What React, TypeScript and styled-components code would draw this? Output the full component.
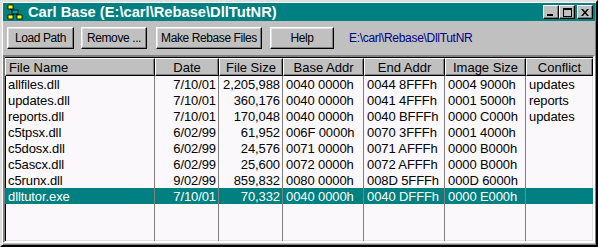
import React from "react"
import { createGlobalStyle, styled } from "styled-components"

const GlobalStyle = createGlobalStyle`
  html, body {
    margin: 0;
    padding: 0;
    background: #c0c0c0;
  }
  * {
    box-sizing: border-box;
  }
`

const COLS = "150px 64px 64px 81px 81px 81px 1fr"

const Window = styled.div`
  width: 598px;
  height: 247px;
  display: flex;
  flex-direction: column;
  background: #c0c0c0;
  border: 2px solid;
  border-color: #dfdfdf #000000 #000000 #dfdfdf;
  box-shadow: inset 1px 1px 0 #ffffff, inset -1px -1px 0 #808080;
  padding: 1px 1px 2px 1px;
  font-family: "Liberation Sans", Arial, sans-serif;
  font-size: 13px;
  color: #000;
  overflow: hidden;
`

const TitleBar = styled.div`
  height: 18px;
  background: #008080;
  display: flex;
  align-items: center;
  padding: 0 2px 0 4px;
  gap: 5px;
`

const TitleText = styled.div`
  flex: 1;
  color: #ffffff;
  font-weight: bold;
  font-size: 14.7px;
  white-space: nowrap;
`

const Controls = styled.div`
  display: flex;
`

const CtrlBtn = styled.div<{ $gapLeft?: boolean }>`
  width: 16px;
  height: 14px;
  margin-left: ${(p) => (p.$gapLeft ? "2px" : "0")};
  background: #c0c0c0;
  border: 1px solid;
  border-color: #ffffff #000000 #000000 #ffffff;
  box-shadow: inset -1px -1px 0 #808080;
  display: flex;
  align-items: center;
  justify-content: center;
`

const Toolbar = styled.div`
  height: 34px;
  display: flex;
  align-items: center;
  padding: 0 0 0 4px;
`

const Button = styled.div<{ $w: number; $gap: number }>`
  width: ${(p) => p.$w}px;
  height: 22px;
  margin-right: ${(p) => p.$gap}px;
  background: #c0c0c0;
  border: 1px solid;
  border-color: #ffffff #000000 #000000 #ffffff;
  box-shadow: inset -1px -1px 0 #808080, inset 1px 1px 0 #dfdfdf;
  display: flex;
  align-items: center;
  justify-content: center;
  white-space: nowrap;
  font-size: 12px;
  letter-spacing: -0.4px;
`

const PathText = styled.div`
  margin-left: 7px;
  color: #000080;
  font-size: 12px;
  letter-spacing: -0.3px;
`

const ListView = styled.div`
  flex: 1;
  border: 2px solid;
  border-color: #808080 #ffffff #ffffff #808080;
  box-shadow: inset 1px 1px 0 #000000, inset -1px -1px 0 #dfdfdf;
  background: #fbf8fb;
  padding: 1px 0 0 0;
  display: flex;
  flex-direction: column;
  position: relative;
`

const Grid = styled.div`
  display: grid;
  grid-template-columns: ${COLS};
`

const HeaderCell = styled.div<{ $align: string }>`
  height: 18px;
  background: #c0c0c0;
  border: 1px solid;
  border-color: #ffffff #000000 #000000 #ffffff;
  box-shadow: inset -1px -1px 0 #808080;
  display: flex;
  align-items: center;
  justify-content: ${(p) => p.$align};
  padding: 0 3px;
  white-space: nowrap;
`

const Row = styled.div<{ $sel?: boolean }>`
  display: grid;
  grid-template-columns: ${COLS};
  height: 16px;
  background: ${(p) => (p.$sel ? "#008080" : "transparent")};
  color: ${(p) => (p.$sel ? "#ffffff" : "#000000")};
`

const Cell = styled.div<{ $right?: boolean }>`
  display: flex;
  align-items: center;
  justify-content: ${(p) => (p.$right ? "flex-end" : "flex-start")};
  padding: 0 3px;
  white-space: nowrap;
  overflow: hidden;
  letter-spacing: -0.1px;
`

const Separators = styled.div`
  position: absolute;
  top: 19px;
  left: 0;
  right: 0;
  bottom: 0;
  display: grid;
  grid-template-columns: ${COLS};
  pointer-events: none;
`

const Sep = styled.div`
  border-right: 1px solid #808080;
`

const headers: [string, string][] = [
  ["File Name", "flex-start"],
  ["Date", "center"],
  ["File Size", "center"],
  ["Base Addr", "center"],
  ["End Addr", "center"],
  ["Image Size", "center"],
  ["Conflict", "center"],
]

const rows = [
  ["allfiles.dll", "7/10/01", "2,205,988", "0040 0000h", "0044 8FFFh", "0004 9000h", "updates"],
  ["updates.dll", "7/10/01", "360,176", "0040 0000h", "0041 4FFFh", "0001 5000h", "reports"],
  ["reports.dll", "7/10/01", "170,048", "0040 0000h", "0040 BFFFh", "0000 C000h", "updates"],
  ["c5tpsx.dll", "6/02/99", "61,952", "006F 0000h", "0070 3FFFh", "0001 4000h", ""],
  ["c5dosx.dll", "6/02/99", "24,576", "0071 0000h", "0071 AFFFh", "0000 B000h", ""],
  ["c5ascx.dll", "6/02/99", "25,600", "0072 0000h", "0072 AFFFh", "0000 B000h", ""],
  ["c5runx.dll", "9/02/99", "859,832", "0080 0000h", "008D 5FFFh", "000D 6000h", ""],
  ["dlltutor.exe", "7/10/01", "70,332", "0040 0000h", "0040 DFFFh", "0000 E000h", ""],
]

const AppIcon = () => (
  <svg width="16" height="16" viewBox="0 0 16 16">
    <rect x="1" y="1" width="5" height="4" fill="#ffff00" stroke="#000" strokeWidth="0.8" />
    <line x1="3.5" y1="5" x2="8" y2="8" stroke="#000" />
    <rect x="5" y="6" width="6" height="4" fill="#00a0a0" stroke="#000" strokeWidth="0.8" />
    <line x1="7" y1="10" x2="3.5" y2="12" stroke="#000" />
    <line x1="9" y1="10" x2="12.5" y2="12" stroke="#000" />
    <rect x="1" y="11" width="5" height="4" fill="#ffff00" stroke="#000" strokeWidth="0.8" />
    <rect x="10" y="11" width="5" height="4" fill="#ffff00" stroke="#000" strokeWidth="0.8" />
  </svg>
)

const App = function () {
  return (
    <>
      <GlobalStyle />
      <Window>
        <TitleBar>
          <AppIcon />
          <TitleText>Carl Base (E:\carl\Rebase\DllTutNR)</TitleText>
          <Controls>
            <CtrlBtn>
              <svg width="8" height="8" viewBox="0 0 8 8">
                <rect x="0" y="6" width="6" height="2" fill="#000" />
              </svg>
            </CtrlBtn>
            <CtrlBtn>
              <svg width="9" height="9" viewBox="0 0 9 9">
                <rect x="0.5" y="0.5" width="8" height="8" fill="none" stroke="#000" />
                <rect x="0" y="0" width="9" height="2" fill="#000" />
              </svg>
            </CtrlBtn>
            <CtrlBtn $gapLeft>
              <svg width="8" height="7" viewBox="0 0 8 7">
                <path d="M0 0h2l2 2.5 2-2.5h2l-3 3.5 3 3.5h-2l-2-2.5-2 2.5h-2l3-3.5z" fill="#000" />
              </svg>
            </CtrlBtn>
          </Controls>
        </TitleBar>
        <Toolbar>
          <Button $w={67} $gap={7}>Load Path</Button>
          <Button $w={66} $gap={9}>Remove ...</Button>
          <Button $w={106} $gap={8}>Make Rebase Files</Button>
          <Button $w={64} $gap={8}>Help</Button>
          <PathText>E:\carl\Rebase\DllTutNR</PathText>
        </Toolbar>
        <ListView>
          <Grid>
            {headers.map(([h, a]) => (
              <HeaderCell key={h} $align={a}>
                {h}
              </HeaderCell>
            ))}
          </Grid>
          {rows.map((r, i) => (
            <Row key={r[0]} $sel={i === rows.length - 1}>
              <Cell>{r[0]}</Cell>
              <Cell $right>{r[1]}</Cell>
              <Cell $right>{r[2]}</Cell>
              <Cell>{r[3]}</Cell>
              <Cell>{r[4]}</Cell>
              <Cell>{r[5]}</Cell>
              <Cell>{r[6]}</Cell>
            </Row>
          ))}
          <Separators>
            <Sep />
            <Sep />
            <Sep />
            <Sep />
            <Sep />
            <Sep />
            <div />
          </Separators>
        </ListView>
      </Window>
    </>
  )
}

export default App
